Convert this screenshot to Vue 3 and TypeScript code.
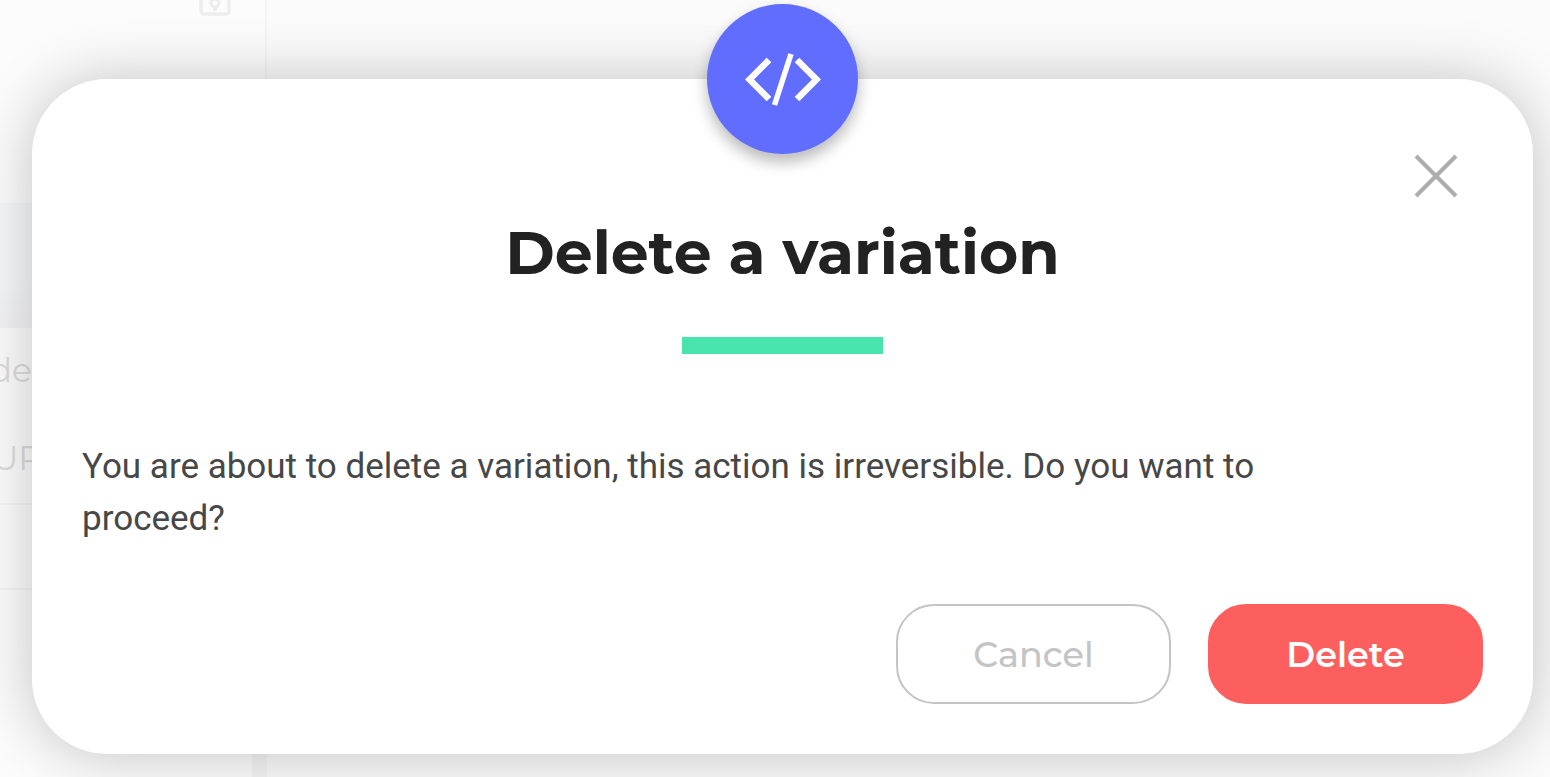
<script setup lang="ts">
import { ref } from 'vue'

const open = ref(true)

function close(): void {
  open.value = false
}
</script>

<template>
  <div class="page">
    <div class="backdrop" aria-hidden="true">
      <div class="sidebar">
        <div class="sidebar-top">
          <svg class="lock" viewBox="0 0 32 36" width="32" height="36">
            <rect x="2" y="2" width="28" height="32" rx="2.5" fill="none" stroke="#ededed" stroke-width="3.5" />
            <circle cx="16" cy="23" r="4" fill="none" stroke="#ededed" stroke-width="3" />
            <path d="M16 26v5" stroke="#ededed" stroke-width="4" />
          </svg>
        </div>
        <div class="band"></div>
        <div class="rows">
          <span class="row-label">de</span>
          <span class="row-label wide">UP</span>
        </div>
        <div class="row"></div>
        <div class="rest"><span class="track"></span></div>
      </div>
      <div class="canvas"></div>
    </div>

    <section v-if="open" class="dialog" role="dialog" aria-modal="true" aria-labelledby="dialog-title">
      <div class="badge">
        <svg viewBox="0 0 76 54" width="76" height="54" fill="none" stroke="#fff">
          <path d="M24 8 4.500 27.500 24 47" stroke-width="6.500" />
          <path d="M52 8 71.500 27.500 52 47" stroke-width="6.500" />
          <path d="M46 2 29.500 53" stroke-width="5.500" />
        </svg>
      </div>
      <button class="close" type="button" aria-label="Close" @click="close">
        <svg viewBox="0 0 44 44" width="44" height="44" fill="none" stroke="#adadad" stroke-width="4">
          <path d="M2 2 42 42M42 2 2 42" />
        </svg>
      </button>
      <h1 id="dialog-title">Delete a variation</h1>
      <div class="rule"></div>
      <p class="message">
        You are about to delete a variation, this action is irreversible. Do you want to proceed?
      </p>
      <div class="actions">
        <button class="button cancel" type="button" @click="close">Cancel</button>
        <button class="button delete" type="button" @click="close">Delete</button>
      </div>
    </section>
  </div>
</template>

<style>
body {
  margin: 0;
}
</style>

<style scoped>
.page {
  position: relative;
  box-sizing: border-box;
  min-height: 100vh;
  padding: 79px 17px 23px 32px;
  overflow: hidden;
  background: #fbfbfb;
  font-family: Montserrat, Inter, sans-serif;
}

.backdrop {
  position: absolute;
  inset: 0;
  display: flex;
}

.sidebar {
  display: flex;
  flex-direction: column;
  box-sizing: border-box;
  width: 267px;
  border-right: 2px solid #f5f5f5;
  background: #fcfcfc;
}

.canvas {
  flex: 1;
  background: #fbfbfb;
}

.sidebar-top {
  display: flex;
  justify-content: flex-end;
  height: 203px;
  padding-right: 34px;
}

.lock {
  margin-top: -20px;
}

.band {
  height: 125px;
  background: linear-gradient(#f7f8fa 60%, #f3f3f6);
}

.rows {
  display: flex;
  flex-direction: column;
  box-sizing: border-box;
  height: 177px;
  padding-top: 20px;
  border-bottom: 2px solid #f5f5f5;
}

.row-label {
  display: flex;
  flex: none;
  justify-content: flex-end;
  width: 32px;
  height: 88px;
  color: #dcdcdc;
  font-size: 33px;
  font-weight: 400;
  line-height: 44px;
}

.row-label.wide {
  width: 42px;
}

.row {
  box-sizing: border-box;
  height: 85px;
  border-bottom: 2px solid #f5f5f5;
}

.rest {
  display: flex;
  flex: 1;
  justify-content: flex-end;
}

.track {
  width: 13px;
  background: #f4f4f4;
}

.dialog {
  position: relative;
  display: flex;
  flex-direction: column;
  align-items: center;
  padding: 0 50px 50px;
  border-radius: 75px;
  background: #fff;
  box-shadow: 0 1px 62px rgba(0, 0, 0, 0.23);
}

.badge {
  display: flex;
  align-items: center;
  justify-content: center;
  width: 151px;
  height: 150px;
  margin-top: -75px;
  border-radius: 50%;
  background: #616dff;
  box-shadow: 0 8px 15px rgba(0, 0, 0, 0.28);
}

.close {
  position: absolute;
  top: 75px;
  right: 75px;
  display: flex;
  padding: 0;
  border: 0;
  background: none;
  cursor: pointer;
}

h1 {
  margin: 63px 0 0;
  color: #222;
  font-size: 60px;
  font-weight: 700;
  line-height: 72px;
}

.rule {
  width: 201px;
  height: 17px;
  margin-top: 48px;
  background: #47e5ab;
}

.message {
  align-self: flex-start;
  max-width: 90%;
  margin: 87px 0 59px;
  color: #474747;
  font-family: Roboto, sans-serif;
  font-size: 35px;
  line-height: 52px;
}

.actions {
  display: flex;
  align-self: flex-end;
  gap: 37px;
}

.button {
  width: 275px;
  height: 100px;
  padding: 0;
  border: 2px solid #c4c4c4;
  border-radius: 38px;
  background: #fff;
  color: #c4c4c4;
  font-family: inherit;
  font-size: 35px;
  font-weight: 500;
  cursor: pointer;
}

.button.delete {
  border-color: #fd5e5e;
  background: #fd5e5e;
  color: #fff;
  font-weight: 600;
}
</style>
